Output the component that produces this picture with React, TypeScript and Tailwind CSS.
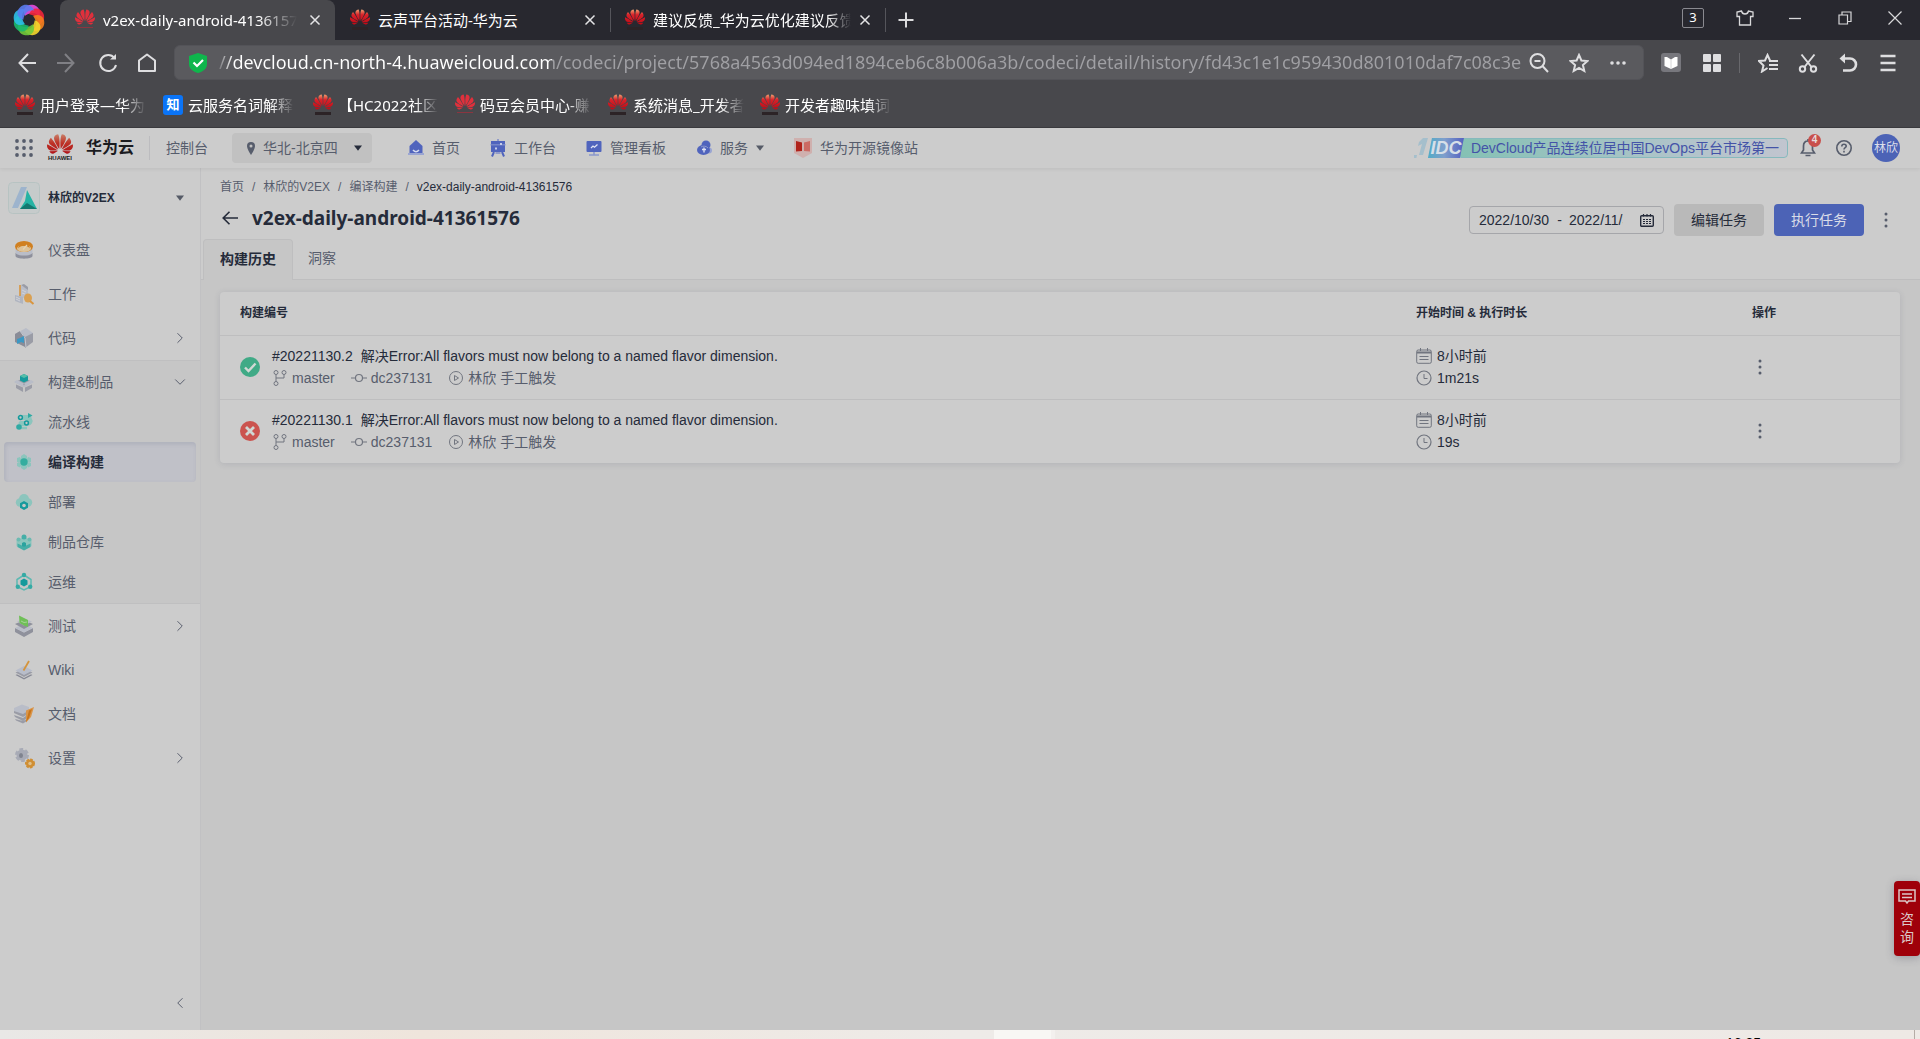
import React from 'react';
import { SiHuawei } from 'react-icons/si';
import { ChevronLeft, ChevronRight, ChevronDown } from 'lucide-react';

type Kids = { children: React.ReactNode };

/* ---------- shared drawings ---------- */

function FlowerIcon({ dark = true }: { dark?: boolean }) {
  return (
    <span className="flex h-5 w-5 shrink-0 flex-col items-center" aria-hidden="true">
      <SiHuawei size={20} className="-mt-[3px]" fill={dark ? 'url(#petalDark)' : '#e0303c'} />
      <span className={dark ? 'h-[3px] w-4 bg-[#2c2326]' : 'h-px w-4 bg-[#8a3540]'} />
    </span>
  );
}

function Defs() {
  return (
    <svg width="0" height="0" className="absolute" aria-hidden="true">
      <defs>
        <linearGradient id="petalDark" x1="0" y1="0" x2="0" y2="1">
          <stop offset="0" stopColor="#f0a070" />
          <stop offset="0.35" stopColor="#d8222a" />
          <stop offset="1" stopColor="#c00a16" />
        </linearGradient>
        <linearGradient id="petalPage" x1="0" y1="0" x2="0" y2="1">
          <stop offset="0" stopColor="#c9806a" />
          <stop offset="0.45" stopColor="#be3328" />
          <stop offset="1" stopColor="#b01318" />
        </linearGradient>
      </defs>
    </svg>
  );
}

function Close({ className }: { className: string }) {
  return (
    <button aria-label="关闭标签页" className={className}>
      <svg width="12" height="12" viewBox="0 0 12 12" stroke="#e4e4e6" strokeWidth="1.5">
        <path d="M1.5 1.5l9 9M10.5 1.5l-9 9" />
      </svg>
    </button>
  );
}

function Caret({ color = '#555a66' }: { color?: string }) {
  return (
    <svg width="8" height="6" viewBox="0 0 8 6" fill={color} aria-hidden="true">
      <path d="M0 0.5h8L4 5.8z" />
    </svg>
  );
}

function Dots() {
  return (
    <svg width="16" height="18" viewBox="0 0 16 18" fill="#575d6c" aria-hidden="true">
      <circle cx="8" cy="3" r="1.5" />
      <circle cx="8" cy="9" r="1.5" />
      <circle cx="8" cy="15" r="1.5" />
    </svg>
  );
}

/* ---------- browser frame ---------- */

function BrowserLogo() {
  const arcs = ['#e64be0', '#f0263b', '#f5801e', '#f3d52c', '#6fc93b', '#19b96f', '#2cc0e8', '#5a7cf0'];
  return (
    <svg width="34" height="34" viewBox="-16 -16 32 32" aria-hidden="true">
      {arcs.map((c, i) => (
        <path key={c} d="M-3 -4.500C-5 -11 0 -15.500 6 -13.500C11 -12 13 -6 10 -1C9 -5 4 -8 -3 -4.500Z" fill={c} opacity="0.9" transform={`rotate(${i * 45 - 10})`} />
      ))}
    </svg>
  );
}

function TabStrip() {
  return (
    <div className="flex h-10 items-stretch bg-[#28282f] text-[15px] text-white">
      <div className="flex w-[60px] items-center pl-3">
        <BrowserLogo />
      </div>
      <div className="flex w-[275px] items-center rounded-t-lg bg-[#48484c] pl-[15px]">
        <FlowerIcon dark={false} />
        <span className="ml-2 w-[194px] overflow-hidden whitespace-nowrap [mask-image:linear-gradient(to_right,#000_80%,transparent)]">
          v2ex-daily-android-41361576
        </span>
        <Close className="ml-3" />
      </div>
      <div className="flex w-[275px] items-center pl-[15px]">
        <FlowerIcon />
        <span className="ml-2 w-[194px] overflow-hidden whitespace-nowrap">云声平台活动-华为云</span>
        <Close className="ml-[12px]" />
      </div>
      <div className="flex w-[275px] items-center">
        <span className="h-6 w-px bg-[#55555b]" />
        <span className="ml-[14px]"><FlowerIcon /></span>
        <span className="ml-2 w-[198px] overflow-hidden whitespace-nowrap [mask-image:linear-gradient(to_right,#000_88%,transparent)]">
          建议反馈_华为云优化建议反馈
        </span>
        <Close className="ml-2" />
      </div>
      <div className="flex items-center">
        <span className="h-6 w-px bg-[#55555b]" />
        <button aria-label="新建标签页" className="ml-3">
          <svg width="16" height="16" viewBox="0 0 16 16" stroke="#dcdcde" strokeWidth="2"><path d="M8 0.500v15M0.500 8h15" /></svg>
        </button>
      </div>
      <div className="ml-auto flex items-center gap-[32px] pr-[18px] pb-1">
        <button className="flex h-5 w-[22px] items-center justify-center rounded-[2px] border border-[#8a8a90] text-[13px]">3</button>
        <button aria-label="皮肤" className="mr-[2px]">
          <svg width="18" height="16" viewBox="0 0 18 16" fill="none" stroke="#d8d8da" strokeWidth="1.3"><path d="M5.500 1L1 2v4.500h2.500V15h11V6.500H17V2l-4.500-1C12 3.500 10.500 4 9 4S6 3.500 5.500 1z" /></svg>
        </button>
        <button aria-label="最小化">
          <svg width="14" height="14" viewBox="0 0 14 14" stroke="#d8d8da" strokeWidth="1.3"><path d="M1 7.500h12" /></svg>
        </button>
        <button aria-label="还原" className="ml-1">
          <svg width="14" height="14" viewBox="0 0 14 14" fill="none" stroke="#d8d8da" strokeWidth="1.2"><path d="M1 4h8.500v9H1zM4 4V1h9v9.500H9.500" /></svg>
        </button>
        <button aria-label="关闭" className="ml-1">
          <svg width="14" height="14" viewBox="0 0 14 14" stroke="#d8d8da" strokeWidth="1.2"><path d="M0.500 0.500l13 13M13.500 0.500l-13 13" /></svg>
        </button>
      </div>
    </div>
  );
}

const svgTool = { fill: 'none', stroke: '#dedee0', strokeWidth: 2 } as const;

function AddressBar() {
  return (
    <div className="flex h-[45px] items-center bg-[#48484c]">
      <div className="flex w-[174px] items-center gap-[19px] pl-[18px]">
        <button aria-label="后退"><svg width="19" height="20" viewBox="0 0 19 20" {...svgTool}><path d="M10 1L1.500 10l8.500 9M1.500 10H18" /></svg></button>
        <button aria-label="前进"><svg width="19" height="20" viewBox="0 0 19 20" fill="none" stroke="#808085" strokeWidth="2"><path d="M9 1l8.500 9L9 19M17.500 10H1" /></svg></button>
        <button aria-label="刷新" className="ml-[4px]"><svg width="20" height="20" viewBox="0 0 20 20" {...svgTool}><path d="M16.500 5A8 8 0 1 0 18 12" /><path d="M12 6.500h6V1z" fill="#dedee0" stroke="none" /></svg></button>
        <button aria-label="主页"><svg width="20" height="20" viewBox="0 0 20 20" {...svgTool}><path d="M2 7.500L10 1.500l8 6V18H2z" strokeLinejoin="round" /></svg></button>
      </div>
      <div className="flex h-[35px] min-w-0 flex-1 items-center rounded-md border border-[#535358] bg-[#5a5a5e] pl-[14px]">
        <svg width="18" height="20" viewBox="0 0 18 20" aria-hidden="true" className="shrink-0"><path d="M9 0l9 3v8c0 5-4 7.500-9 9-5-1.500-9-4-9-9V3z" fill="#0fb64c" /><path d="M4.500 9.500l3.500 3.500 6-6" fill="none" stroke="#fff" strokeWidth="2.2" /></svg>
        <input
          aria-label="地址栏"
          readOnly
          className="ml-3 h-8 min-w-0 flex-1 bg-[linear-gradient(90deg,#77777b_0px,#fff_14px,#fff_333px,#a0a0a4_333px)] bg-clip-text pb-[2px] text-[18px] text-transparent outline-none"
          defaultValue="//devcloud.cn-north-4.huaweicloud.com/codeci/project/5768a4563d094ed1894ceb6c8b006a3b/codeci/detail/history/fd43c1e1c959430d801010daf7c08c3e"
        />
        <div className="flex items-center gap-[20px] pr-4 pl-1">
          <button aria-label="缩小"><svg width="20" height="20" viewBox="0 0 20 20" {...svgTool}><circle cx="8.500" cy="8" r="7" /><path d="M5.500 8h6M13.500 13l5.500 6" /></svg></button>
          <button aria-label="收藏"><svg width="20" height="20" viewBox="0 0 20 20" {...svgTool}><path d="M10 2l2.400 5.500 6 .5-4.500 4 1.400 6L10 15l-5.300 3 1.400-6-4.500-4 6-.5z" /></svg></button>
          <button aria-label="更多"><svg width="18" height="6" viewBox="0 0 18 6" fill="#dedee0"><circle cx="3" cy="3" r="1.800" /><circle cx="9" cy="3" r="1.800" /><circle cx="15" cy="3" r="1.800" /></svg></button>
        </div>
      </div>
      <div className="flex items-center pr-6 pl-[17px]">
        <button aria-label="阅读"><svg width="20" height="19" viewBox="0 0 20 19"><rect width="20" height="19" rx="3" fill="#77777d" /><path d="M3.500 4l2.500 0 4 2.500L14 4h2.500v9L10 16l-6.500-3z" fill="#fff" /><path d="M10 6.500V16" stroke="#c9c9cc" strokeWidth="0.800" /></svg></button>
        <button aria-label="应用" className="ml-[22px]"><svg width="18" height="18" viewBox="0 0 18 18" fill="#dedee0"><rect width="8" height="8" rx="1" /><rect x="10" width="8" height="8" rx="1" /><rect y="10" width="8" height="8" rx="1" /><rect x="10" y="10" width="8" height="8" rx="1" /></svg></button>
        <span className="ml-[18px] h-5 w-px bg-[#68686c]" />
        <button aria-label="收藏夹" className="ml-[18px]"><svg width="20" height="20" viewBox="0 0 20 20" {...svgTool}><path d="M9.500 15L4 18.500l1.500-6L1 8l6-.5L9.500 2 12 7.500" /><path d="M11 8h9M11 12h9M11 16h9" /></svg></button>
        <button aria-label="截图" className="ml-5"><svg width="20" height="20" viewBox="0 0 20 20" {...svgTool}><circle cx="4.500" cy="16" r="2.700" /><circle cx="15.500" cy="16" r="2.700" /><path d="M3.500 1.500L13.500 14M16.500 1.500L6.500 14" /></svg></button>
        <button aria-label="恢复" className="ml-5"><svg width="20" height="20" viewBox="0 0 20 20" {...svgTool} strokeWidth="2.600"><path d="M4 5.500h8a5.500 5.500 0 0 1 0 12H5" /><path d="M7 0.500L1.500 5.500 7 10.500z" fill="#dedee0" stroke="none" /></svg></button>
        <button aria-label="菜单" className="ml-[22px]"><svg width="16" height="18" viewBox="0 0 16 18" {...svgTool} strokeWidth="2.400"><path d="M0.500 2h15M0.500 9h15M0.500 16h15" /></svg></button>
      </div>
    </div>
  );
}

type Mark = { label: string; kind: 'dark' | 'light' | 'zhi'; w: string; gap: string };
const marks: Mark[] = [
  { label: '用户登录—华为', kind: 'dark', w: 'w-[106px]', gap: 'ml-[15px]' },
  { label: '云服务名词解释', kind: 'zhi', w: 'w-[106px]', gap: 'ml-[17px]' },
  { label: '【HC2022社区', kind: 'dark', w: 'w-[100px]', gap: 'ml-[19px]' },
  { label: '码豆会员中心-赚', kind: 'light', w: 'w-[112px]', gap: 'ml-[17px]' },
  { label: '系统消息_开发者', kind: 'dark', w: 'w-[111px]', gap: 'ml-[16px]' },
  { label: '开发者趣味填词', kind: 'dark', w: 'w-[106px]', gap: 'ml-[16px]' },
];

function Bookmarks() {
  return (
    <nav className="flex h-[43px] items-center border-b border-[#3b3b3f] bg-[#48484c] pb-[2px] text-[15px] text-white">
      {marks.map((m) => (
        <a key={m.label} href="#" className={`flex items-center gap-[5px] ${m.gap}`}>
          {m.kind === 'zhi' ? (
            <span className="flex h-5 w-5 items-center justify-center rounded-[3px] bg-[#0a74f7] text-[13px] font-bold">知</span>
          ) : (
            <FlowerIcon dark={m.kind === 'dark'} />
          )}
          <span className={`overflow-hidden whitespace-nowrap [mask-image:linear-gradient(to_right,#000_78%,transparent)] ${m.w}`}>{m.label}</span>
        </a>
      ))}
    </nav>
  );
}

/* ---------- page header ---------- */

const blue = '#5064bd';
const navIcons = {
  home: (
    <svg width="16" height="18" viewBox="0 0 16 18"><path d="M8 1l6.500 6v9h-13V7z" fill={blue} /><path d="M0 14h16v2H0z" fill="#9aa5d2" /><path d="M5 11q3 3.500 6 0" stroke="#d5daee" strokeWidth="1.500" fill="none" /></svg>
  ),
  desk: (
    <svg width="16" height="18" viewBox="0 0 16 18"><rect x="1" y="2" width="14" height="11" fill={blue} /><path d="M0 5h16v1.500H0z" fill="#8f9ccf" opacity="0.600" /><path d="M4 13L2 17.500M12 13l2 4.500" stroke={blue} strokeWidth="2" /><path d="M8 0v2M5.500 14h5" stroke="#7d8ac8" strokeWidth="1.500" /><path d="M5 8.500h2v2H5zM10 4h2v2h-2z" fill="#c5cce8" /></svg>
  ),
  board: (
    <svg width="16" height="18" viewBox="0 0 16 18"><rect x="0.500" y="2" width="15" height="11" rx="1" fill={blue} /><path d="M8 13v3M3 16h10" stroke="#8b98cc" strokeWidth="1.600" /><path d="M5 9l2-2 1.500 1.200L11.500 5.500" stroke="#e0e4f4" strokeWidth="1.300" fill="none" /></svg>
  ),
  cloud: (
    <svg width="16" height="16" viewBox="0 0 16 16"><circle cx="10" cy="5" r="4.500" fill={blue} /><circle cx="13" cy="10.500" r="3" fill="#9aa5d2" /><ellipse cx="7.500" cy="10" rx="6.500" ry="5" fill={blue} /><path d="M5 7a5 4.500 0 0 1 7 1" stroke="#8f9ccf" fill="none" /><path d="M8 7.500v5M6 9.500h4" stroke="#dfe3f4" strokeWidth="1.300" /></svg>
  ),
  mirror: (
    <svg width="18" height="20" viewBox="0 0 18 20"><path d="M0 0h18v15l-9 5-9-5z" fill="#cfb0ae" /><path d="M2 3l6 1.500V13l-6 .5z" fill="#b0231b" /><path d="M16 3l-6 1.500V13l6 .5z" fill="#cc6a63" /></svg>
  ),
};

function NavLink({ icon, children }: Kids & { icon: React.ReactNode }) {
  return (
    <a href="#" className="flex items-center gap-2">
      {icon}
      {children}
    </a>
  );
}

function PageHeader() {
  return (
    <header className="relative z-10 flex h-10 shrink-0 items-center bg-[#cccccc] text-sm text-[#575d6c] shadow-[0_1px_4px_rgba(0,0,0,0.08)]">
      <button aria-label="服务列表" className="ml-[15px]">
        <svg width="18" height="18" viewBox="0 0 18 18" fill="#575d6c">
          {[2, 9, 16].map((y) => [2, 9, 16].map((x) => <circle key={`${x}-${y}`} cx={x} cy={y} r="1.900" />))}
        </svg>
      </button>
      <a href="#" className="ml-[14px] flex items-center">
        <span className="flex w-[26px] flex-col items-center">
          <SiHuawei size={26} fill="url(#petalPage)" className="-mt-[4px] -mb-[2px]" />
          <span className="text-[6px] leading-[6px] font-bold text-[#1c1c1c]">HUAWEI</span>
        </span>
        <span className="ml-[13px] text-base font-bold text-[#1b1b1f]">华为云</span>
      </a>
      <span className="ml-[15px] h-6 w-px bg-[#bcbcbf]" />
      <a href="#" className="ml-4">控制台</a>
      <button className="ml-6 flex h-[30px] w-[140px] items-center rounded bg-[#c1c1c1] pl-[15px]">
        <svg width="8" height="13" viewBox="0 0 8 13" aria-hidden="true"><path d="M4 0a4 4 0 0 1 4 4c0 3-4 9-4 9S0 7 0 4a4 4 0 0 1 4-4z" fill="#575d6c" /><circle cx="4" cy="4" r="1.500" fill="#c1c1c1" /></svg>
        <span className="mr-4 ml-2">华北-北京四</span>
        <Caret color="#252b3a" />
      </button>
      <nav className="ml-9 flex items-center gap-[30px]">
        <NavLink icon={navIcons.home}>首页</NavLink>
        <NavLink icon={navIcons.desk}>工作台</NavLink>
        <NavLink icon={navIcons.board}>管理看板</NavLink>
        <NavLink icon={navIcons.cloud}>服务<Caret /></NavLink>
        <NavLink icon={navIcons.mirror}>华为开源镜像站</NavLink>
      </nav>
      <div className="ml-auto flex items-center pr-5">
        <a href="#" className="flex h-5 items-center">
          <svg width="14" height="20" viewBox="0 0 14 20" aria-hidden="true">
            <path d="M9 0h5L9 17H5l3-11-4 2 1-4zM0 17h3l-.6 3H-.5z" fill="#a5bfcc" />
          </svg>
          <span className="z-[1] flex h-5 w-[36px] items-center justify-center bg-[linear-gradient(90deg,#52abc6,#7f9fcc_45%,#5461c0)] text-lg font-bold text-[#d6dfe8] italic [clip-path:polygon(4px_0,100%_0,32px_100%,0_100%)]">IDC</span>
          <span className="-ml-1 flex h-5 items-center rounded-r border border-[#86b9bd] bg-[linear-gradient(90deg,#85c1b4,#b2c4cb_70%,#c1c5cf)] pr-2 pl-[10px] whitespace-nowrap text-[#4453a8]">
            DevCloud产品连续位居中国DevOps平台市场第一
          </span>
        </a>
        <button aria-label="通知" className="relative ml-3">
          <svg width="16" height="18" viewBox="0 0 16 18" fill="none" stroke="#575d6c" strokeWidth="1.700"><path d="M8 2C5 2 3.500 4 3.500 7v4L1.500 14h13l-2-3V7C12.500 4 11 2 8 2zM8 0v2M5.500 16.500h5" /></svg>
          <span className="absolute -top-[5px] left-2 flex h-[13px] w-[13px] items-center justify-center rounded-full bg-[#c9504c] text-[10px] font-bold text-[#e6dcdc]">4</span>
        </button>
        <button aria-label="帮助" className="ml-5">
          <svg width="16" height="16" viewBox="0 0 16 16" fill="none" stroke="#575d6c"><circle cx="8" cy="8" r="7.200" strokeWidth="1.600" /><path d="M5.800 6.500C5.800 5 6.800 4.300 8 4.300s2.200.8 2.200 2C10.200 7.700 8 7.700 8 9.500M8 10.800v1.600" strokeWidth="1.600" /></svg>
        </button>
        <button className="ml-5 flex h-7 w-7 items-center justify-center rounded-full bg-[#4c63b6] text-xs whitespace-nowrap text-[#dcdfea]">林欣</button>
      </div>
    </header>
  );
}

/* ---------- sidebar ---------- */

const teal = '#159a9c';
const mint = '#8cc5bd';
const grey = '#9a9ca6';
const pale = '#b9bdc8';

const icons: Record<string, React.ReactNode> = {
  gauge: <><path d="M0.500 12v3c0 3.500 17 3.500 17 0v-3z" fill="#8e909c" /><path d="M0.500 8v3.500c0 4 17 4 17 0V8z" fill={pale} /><ellipse cx="9" cy="5.500" rx="9" ry="5.500" fill="#d08021" /><ellipse cx="9" cy="7.500" rx="7" ry="3.500" fill="#dcc39a" /><path d="M3 7.500c1-4 4-5 6-5s5 1 6 5c-2-2-3-2.500-6-2.500s-4 .5-6 2.500z" fill="#d08021" /><path d="M8 8.500l4-4.500" stroke="#e4d2b4" strokeWidth="1.200" /></>,
  work: <><path d="M5 0l8 4v10l-8-2z" fill={pale} /><path d="M6 0l3-1 4 3v3z" fill={grey} /><path d="M5 0v11" stroke="#d9953e" strokeWidth="1.600" /><path d="M0 10l8 2v7l-8-3z" fill="#b0b5c0" /><path d="M1 12l4 2M1 14l4 2M7 5l4 2M7 8l3 1" stroke="#d0d2d8" /><ellipse cx="13" cy="13" rx="4" ry="4.500" fill="#d9a052" /><path d="M15 16l3.500 3" stroke="#d9953e" strokeWidth="2" /></>,
  code: <><path d="M0 5L11-1l7 5v1l-8 5z" fill={pale} /><path d="M0 5l5-3 5 6v10l-10-5z" fill="#8a8c97" /><path d="M10 8l8-4v9l-8 6z" fill={grey} /><path d="M5 2l5 7 1 9" stroke="#c3c6cf" fill="none" /><path d="M2 10l3-1 4-2v7l-3-1-4 2z" fill="#3b98c4" /></>,
  box: <><path d="M0 9l9-4 9 4-9 4.500z" fill={grey} /><path d="M-1 9l3-2 8 4-2 3zM19 9l-3-2-8 4 2 3z" fill={pale} /><path d="M1 11.500l7 3v4.500l-7-4zM17 11.500l-7 3v4.500l7-4z" fill={grey} /><path d="M5 3l4-2 4 2v4.500l-4 2-4-2z" fill={teal} /><path d="M5 3l4-2 4 2-4 2z" fill="#54bda9" /></>,
  pipe: <><path d="M5 4.500h9M6 10.500h6.500a2.500 2.500 0 0 0 2-4" fill="none" stroke={mint} strokeWidth="5" strokeLinecap="round" /><path d="M4 15h8" stroke={mint} strokeWidth="2.500" /><circle cx="5.500" cy="4.500" r="1.900" fill="#c6c6c6" stroke={teal} strokeWidth="1.500" /><circle cx="11.500" cy="10" r="1.900" fill="#c6c6c6" stroke={teal} strokeWidth="1.500" /><circle cx="4" cy="14" r="2.800" fill="#30aaa4" /><path d="M13 0l4.500 2.500L13 5z" fill="#30aaa4" /></>,
  build: <><path d="M9 1l3 2v3H6V3zM9 17l3-2v-3H6v3zM2 5l3-1 2 4-2 2-3-1zM16 5l-3-1-2 4 2 2 3-1zM2 13l3 1.500L7 11l-2-1.500L2 10zM16 13l-3 1.500L11 11l2-1.500L16 10z" fill={mint} /><circle cx="9" cy="9" r="3.700" fill="#35ad9f" /></>,
  deploy: <><circle cx="5" cy="9.500" r="4.200" fill={mint} /><circle cx="13" cy="9.500" r="4.200" fill={mint} /><circle cx="9" cy="6" r="5" fill={mint} /><path d="M9 8l4 2.200v4.600L9 17l-4-2.200v-4.600z" fill={teal} /><circle cx="9" cy="12.500" r="1.800" fill="#c6c6c6" /></>,
  repo: <><path d="M1.500 7l7.500-3 7.500 3v6L9 17l-7.500-4z" fill={mint} /><path d="M2.500 10.500l6.500 3 6.500-3v3.500L9 17.500 2.500 14z" fill="#45aea7" /><circle cx="9" cy="4" r="2.500" fill="#45aea7" /><circle cx="3.500" cy="6.500" r="2" fill="#6dbab2" /><circle cx="14.500" cy="6.500" r="2" fill="#6dbab2" /><path d="M7 10l2-1 2 1v3l-2 1-2-1z" fill="#2aa39f" /></>,
  ops: <><path d="M9 2l7 4.500v7L9 17l-7-3.500v-7z" fill="none" stroke="#5db9b2" strokeWidth="1.500" /><path d="M9 5.500l3.500 2v4L9 13.500l-3.500-2v-4z" fill={teal} /><circle cx="9" cy="2" r="2.200" fill="#35aaa4" /><circle cx="2.800" cy="13.700" r="2.200" fill="#35aaa4" /><circle cx="15.200" cy="13.700" r="2.200" fill="#35aaa4" /></>,
  test: <><path d="M0 11v4l9 5 9-5v-4l-9 4.500z" fill="#8f919c" /><path d="M0 11l9-4.500 9 4.500-9 4.500z" fill={pale} /><path d="M0 7l9-4 9 4-9 5z" fill="#8e909b" /><path d="M2 4.500l7-3 8 3-8 4z" fill={pale} /><path d="M4-1.500l9 4.500v7L9 8.500 4.500 6z" fill="#6fbf57" /><path d="M6 4l3 1.500L12 5" stroke="#a5d496" fill="none" /></>,
  wiki: <><path d="M0.500 14l8.500-4 8.500 4L9 18.500z" fill="#878995" /><path d="M0.500 12.500L9 8.500l8.500 4L9 17z" fill="#cccccc" /><path d="M0.500 11.500L9 7.500l8.500 4L9 16z" fill={grey} /><path d="M0.500 9.500L9 5l8.500 4.500L9 14z" fill="#b8bdca" /><path d="M8.500 9.500L14 0" stroke="#d4943c" strokeWidth="1.800" /></>,
  docs: <><path d="M-1 3l8-3.500L14 2v5l-6 3-9-4z" fill={pale} /><path d="M-1 6l9 3 5-3v3l-5 3-9-4zM-1 10l9 3 4-3v3l-4 3-8-4zM0 14l8 2 4-2v2l-4 2.500-7-3z" fill={grey} /><path d="M11 5.500L19 2l-3 10-5 5.500z" fill="#d9954a" /><path d="M14 5.500l3-1.500-3 9-3 4z" fill="#c9751a" /></>,
  gear: <><circle cx="7" cy="6" r="5.500" fill="#a8abb6" stroke="#a8abb6" strokeWidth="3" strokeDasharray="3.500 2.200" /><ellipse cx="6" cy="6.500" rx="2" ry="2.600" fill="#7f838f" /><circle cx="15" cy="14.500" r="4" fill="#d08f34" stroke="#d08f34" strokeWidth="2" strokeDasharray="2.500 1.200" /><circle cx="15" cy="14.500" r="1.700" fill="#dfc08a" /></>,
};

type ItemProps = { icon: string; label: string; h: string; arrow?: 'right' | 'down'; active?: boolean };

function Item({ icon, label, h, arrow, active }: ItemProps) {
  return (
    <li className={active ? 'px-1' : ''}>
      <a
        href="#"
        className={`flex items-center ${h} ${active ? 'rounded bg-[#c0c1c8] pr-3 pl-[11px] font-bold text-[#252b3a] shadow-[inset_1px_2px_4px_rgba(90,100,130,0.18)]' : 'pr-3 pl-[15px]'}`}
      >
        <svg width="18" height="18" viewBox="0 0 18 18" className="mr-[15px] overflow-visible" aria-hidden="true">{icons[icon]}</svg>
        {label}
        {arrow === 'right' && <ChevronRight size={18} strokeWidth={1.3} className="-mr-px ml-auto" />}
        {arrow === 'down' && <ChevronDown size={18} strokeWidth={1.3} className="-mr-px ml-auto" />}
      </a>
    </li>
  );
}

function Sidebar() {
  return (
    <aside className="flex w-[201px] shrink-0 flex-col border-r border-[#c1c1c3] bg-[#cccccc] text-sm text-[#575d6c]">
      <button className="flex h-[60px] items-center pr-4 pl-2 text-left">
        <svg width="32" height="32" viewBox="0 0 32 32" aria-hidden="true">
          <rect x="0.500" y="0.500" width="31" height="31" rx="4" fill="#c6cbcb" stroke="#b7c3c2" />
          <path d="M4 26L13 5h6l-9 21z" fill="#9db4cd" />
          <path d="M19 8l10 19H12l5-8z" fill="#25b3a4" />
          <path d="M12 27l7-6 10 6z" fill="#15786f" />
        </svg>
        <span className="ml-2 text-xs font-bold text-[#252b3a]">林欣的V2EX</span>
        <span className="ml-auto"><Caret /></span>
      </button>
      <ul>
        <Item icon="gauge" label="仪表盘" h="h-11" />
        <Item icon="work" label="工作" h="h-11" />
        <Item icon="code" label="代码" h="h-11" arrow="right" />
        <li className="border-y border-[#bfbfc0] bg-[#c6c6c6] pb-px">
          <ul>
            <Item icon="box" label="构建&制品" h="h-[41px]" arrow="down" />
            <Item icon="pipe" label="流水线" h="h-10" />
            <Item icon="build" label="编译构建" h="h-10" active />
            <Item icon="deploy" label="部署" h="h-10" />
            <Item icon="repo" label="制品仓库" h="h-10" />
            <Item icon="ops" label="运维" h="h-10" />
          </ul>
        </li>
        <Item icon="test" label="测试" h="h-11" arrow="right" />
        <Item icon="wiki" label="Wiki" h="h-11" />
        <Item icon="docs" label="文档" h="h-11" />
        <Item icon="gear" label="设置" h="h-11" arrow="right" />
      </ul>
      <button aria-label="收起菜单" className="mt-auto mr-[11px] mb-[18px] self-end">
        <ChevronLeft size={18} strokeWidth={1.3} />
      </button>
    </aside>
  );
}

/* ---------- main area ---------- */

function CalendarIcon() {
  return (
    <svg width="16" height="16" viewBox="0 0 16 16" fill="none" stroke="#71757f" aria-hidden="true">
      <rect x="0.700" y="2" width="14.600" height="13.300" rx="1.500" />
      <path d="M1 4.500h14" strokeWidth="2" />
      <path d="M4.500 0v3M11.500 0v3M3.500 8.500h9M3.500 11.500h9" />
    </svg>
  );
}

function TitleArea() {
  return (
    <div className="flex justify-between border-b border-[#bebebf] bg-[#cccccc]">
      <div>
        <nav aria-label="面包屑" className="flex h-[38px] items-center gap-2 pl-[19px] text-xs text-[#575d6c]">
          <a href="#">首页</a><span>/</span>
          <a href="#">林欣的V2EX</a><span>/</span>
          <a href="#">编译构建</a><span>/</span>
          <span className="text-[#252b3a]">v2ex-daily-android-41361576</span>
        </nav>
        <div className="flex h-6 items-center pl-[21px]">
          <button aria-label="返回">
            <svg width="16" height="14" viewBox="0 0 16 14" fill="none" stroke="#252b3a" strokeWidth="1.600"><path d="M7.500 0.700L1.200 7l6.300 6.300M1.200 7H16" /></svg>
          </button>
          <h1 className="ml-[14px] font-['Noto_Sans','Noto_Sans_CJK_SC',sans-serif] text-[19px] leading-6 font-bold text-[#252b3a]">v2ex-daily-android-41361576</h1>
        </div>
        <div role="tablist" className="-mb-px mt-[9px] flex h-[41px] pl-[2px] text-sm">
          <button role="tab" aria-selected="true" className="w-[90px] rounded-t border border-b-0 border-[#bebebf] bg-[#c6c6c6] pb-[3px] font-bold text-[#252b3a]">构建历史</button>
          <button role="tab" aria-selected="false" className="px-[15px] pb-[3px] text-[#575d6c]">洞察</button>
        </div>
      </div>
      <div className="mt-9 flex h-8 items-center pr-[26px] text-sm">
        <div className="flex h-7 w-[195px] items-center rounded border border-[#a5a6aa] px-[9px] text-[#252b3a]">
          <input aria-label="开始日期" defaultValue="2022/10/30" className="w-[71px] bg-transparent outline-none" />
          <span className="w-[19px] text-center">-</span>
          <input aria-label="结束日期" defaultValue="2022/11/30" className="w-[54px] bg-transparent outline-none" />
          <button aria-label="选择日期" className="ml-auto">
            <svg width="14" height="13" viewBox="0 0 14 13" fill="none" stroke="#252b3a"><rect x="0.700" y="1.700" width="12.600" height="10.600" rx="1" strokeWidth="1.400" /><path d="M3.500 0v2.500M7 0v2.500M10.500 0v2.500" strokeWidth="1.200" /><path d="M3 5.500h8M3 7.500h8M3 9.500h8" strokeDasharray="2 1" strokeWidth="1.200" /></svg>
          </button>
        </div>
        <button className="ml-[10px] h-8 w-[90px] rounded bg-[#b9b9b9] text-[#252b3a]">编辑任务</button>
        <button className="ml-[10px] h-8 w-[90px] rounded bg-[#4c63b6] text-[#dadde8]">执行任务</button>
        <button aria-label="更多操作" className="ml-[14px]"><Dots /></button>
      </div>
    </div>
  );
}

type Build = { no: string; ok: boolean; took: string };
const builds: Build[] = [
  { no: '#20221130.2', ok: true, took: '1m21s' },
  { no: '#20221130.1', ok: false, took: '19s' },
];

function BuildRow({ b }: { b: Build }) {
  return (
    <tr className="h-16 border-t border-[#bebebf]">
      <td className="px-5">
        <div className="flex items-center gap-3">
          <svg width="20" height="20" viewBox="0 0 20 20" role="img" aria-label={b.ok ? '成功' : '失败'}>
            <circle cx="10" cy="10" r="10" fill={b.ok ? '#40aa86' : '#cb544f'} />
            <path d={b.ok ? 'M5 10.500l3.500 3.500L15.500 6.500' : 'M6 6l8 8M14 6l-8 8'} fill="none" stroke="#d0d8d4" strokeWidth={b.ok ? 2.4 : 2.8} />
          </svg>
          <div className="leading-[22px]">
            <a href="#" className="block text-[#252b3a]">
              <span className="mr-2">{b.no}</span>解决Error:All flavors must now belong to a named flavor dimension.
            </a>
            <div className="flex items-center text-[#575d6c]">
              <svg width="14" height="16" viewBox="0 0 14 16" fill="none" stroke="#71757f" className="ml-px" aria-hidden="true"><circle cx="3" cy="2.500" r="2" /><circle cx="11" cy="2.500" r="2" /><circle cx="3" cy="13.500" r="2" /><path d="M3 4.500v7M11 4.500V8H3" /></svg>
              <span className="ml-[5px]">master</span>
              <svg width="16" height="10" viewBox="0 0 16 10" fill="none" stroke="#71757f" strokeWidth="1.200" className="ml-4" aria-hidden="true"><circle cx="8" cy="5" r="3.500" /><path d="M0 5h4.500M11.500 5H16" /></svg>
              <span className="ml-1">dc237131</span>
              <svg width="14" height="14" viewBox="0 0 14 14" fill="none" stroke="#71757f" className="ml-[17px]" aria-hidden="true"><circle cx="7" cy="7" r="6.500" /><path d="M5.500 4.500L9.500 7l-4 2.500z" /></svg>
              <span className="ml-[5px]">林欣 手工触发</span>
            </div>
          </div>
        </div>
      </td>
      <td className="px-5 leading-[22px] text-[#252b3a]">
        <div className="flex items-center gap-[5px]"><CalendarIcon />8小时前</div>
        <div className="flex items-center gap-[5px]">
          <svg width="16" height="16" viewBox="0 0 16 16" fill="none" stroke="#71757f" aria-hidden="true"><circle cx="8" cy="8" r="7" strokeWidth="1.200" /><path d="M8 4v4.500h3.500" /></svg>
          {b.took}
        </div>
      </td>
      <td className="px-5"><button aria-label="操作菜单" className="flex"><Dots /></button></td>
    </tr>
  );
}

function Main() {
  return (
    <main className="min-w-0 flex-1 bg-[#c6c6c6]">
      <TitleArea />
      <div className="mt-3 mr-5 ml-[19px] overflow-hidden rounded bg-[#cccccc] shadow-[0_1px_6px_rgba(60,65,90,0.14)]">
        <table className="w-full table-fixed text-left text-sm">
          <thead>
            <tr className="h-[43px] text-xs text-[#252b3a]">
              <th className="w-[70%] px-5 font-bold">构建编号</th>
              <th className="w-[20%] px-5 font-bold">开始时间 &amp; 执行时长</th>
              <th className="w-[10%] px-5 font-bold">操作</th>
            </tr>
          </thead>
          <tbody>
            {builds.map((b) => <BuildRow key={b.no} b={b} />)}
          </tbody>
        </table>
      </div>
    </main>
  );
}

export default function App() {
  return (
    <div className="flex h-screen flex-col overflow-hidden font-['Liberation_Sans','Noto_Sans_CJK_SC',sans-serif]">
      <Defs />
      <div className="shrink-0 font-['Noto_Sans','Noto_Sans_CJK_SC',sans-serif]">
        <TabStrip />
        <AddressBar />
        <Bookmarks />
      </div>
      <div className="relative flex min-h-0 flex-1 flex-col">
        <PageHeader />
        <div className="flex min-h-0 flex-1">
          <Sidebar />
          <Main />
        </div>
        <button className="absolute right-0 bottom-[74px] flex h-[75px] w-[26px] flex-col items-center rounded bg-[#9f000a] pt-2 text-sm leading-[18px] text-[#dcc8c9] shadow-[0_2px_8px_rgba(60,60,80,0.3)]">
          <svg width="18" height="15" viewBox="0 0 18 15" fill="none" stroke="#dcc8c9" strokeWidth="1.500" className="mb-[6px] shrink-0" aria-hidden="true"><path d="M1 1h16v11h-6.500L9 14l-1.500-2H1zM4 5h10M4 8.500h10" /></svg>
          <span>咨</span>
          <span>询</span>
        </button>
      </div>
      <footer className="flex h-[9px] shrink-0 items-start overflow-hidden bg-[linear-gradient(90deg,#e9e8e6,#efe5dc_22%,#eeebe8_50%,#eee9e5)]">
        <span className="ml-[994px] h-full w-[61px] border-r-4 border-[#f3f0ee] bg-[#f8f7f4]" />
        <time className="mt-[5px] mr-[153px] ml-auto text-sm leading-4 text-black">16:35</time>
        <span className="mr-[5px] h-full w-px bg-[#b5aca6]" />
      </footer>
    </div>
  );
}
